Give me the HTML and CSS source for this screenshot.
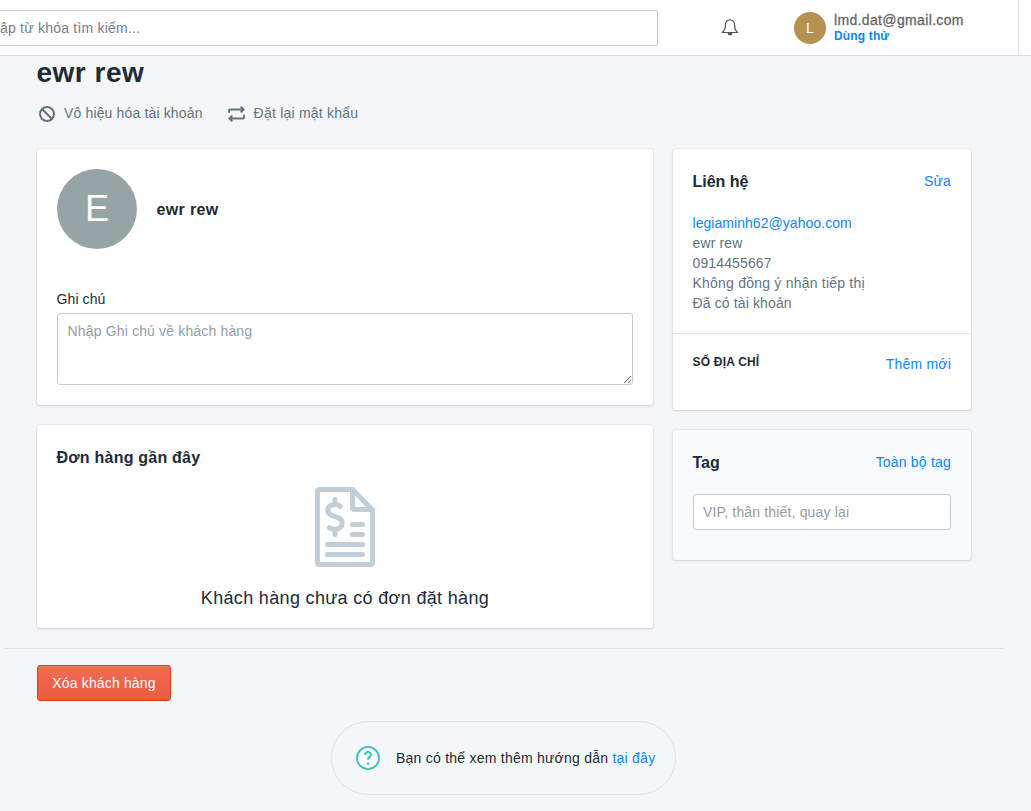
FILE: index.html
```html
<!DOCTYPE html>
<html lang="vi">
<head>
<meta charset="utf-8">
<title>ewr rew</title>
<link rel="stylesheet" href="styles.css">
</head>
<body>
<header class="topbar">
  <div class="search"><span class="search-text">ập từ khóa tìm kiếm...</span></div>
  <div class="bell">
    <svg width="18" height="18" viewBox="0 0 18 18" fill="none" stroke="#555" stroke-width="1.2" stroke-linejoin="round" stroke-linecap="round"><path d="M9 1v1M9 2C5.900 2 4.400 4.300 4.400 7.200c0 3.500-1 5.500-3.200 7.300h15.600c-2.200-1.800-3.200-3.800-3.200-7.300C13.600 4.300 12.100 2 9 2Z"/><path d="M7.200 15.600c.4 1.700 3.200 1.700 3.600 0Z" fill="#555"/></svg>
  </div>
  <div class="account">
    <div class="account-avatar">L</div>
    <div class="account-info">
      <div class="account-email">lmd.dat@gmail.com</div>
      <div class="account-plan">Dùng thử</div>
    </div>
  </div>
  <div class="topbar-end"></div>
</header>
<main class="page">
  <h1 class="title">ewr rew</h1>
  <div class="actions">
    <div class="action">
      <svg width="16" height="16" viewBox="0 0 16 16" fill="none" stroke="#637381" stroke-width="2"><circle cx="8" cy="8" r="7"/><path d="m3 3 10 10"/></svg>
      <span class="action-disable">Vô hiệu hóa tài khoản</span>
    </div>
    <div class="action">
      <svg width="17" height="16" viewBox="0 0 17 16" fill="none" stroke="#637381" stroke-width="2" stroke-linecap="round" stroke-linejoin="round"><path d="M1 6V4.500Q1 3.500 2 3.500H15.500M13.300 1.200 15.600 3.500l-2.300 2.300M16 9.500V11.500Q16 12.500 15 12.500H1.500M3.700 10.200 1.400 12.500l2.300 2.300"/></svg>
      <span class="action-reset">Đặt lại mật khẩu</span>
    </div>
  </div>
  <div class="columns">
    <div class="column">
      <section class="card profile">
        <div class="person">
          <div class="avatar">E</div>
          <h2 class="heading person-name">ewr rew</h2>
        </div>
        <label class="label" for="note">Ghi chú</label>
        <textarea class="note" id="note" placeholder="Nhập Ghi chú về khách hàng"></textarea>
      </section>
      <section class="card orders">
        <h2 class="heading orders-heading">Đơn hàng gần đây</h2>
        <svg class="orders-icon" width="60" height="80" viewBox="0 0 60 80" fill="none" stroke="#c1cdd7" stroke-width="5" stroke-linecap="round" stroke-linejoin="round"><path d="M4.500 2.500h33L57.500 23v52.500q0 2-2 2h-51q-2 0-2-2v-71q0-2 2-2Z"/><path d="M37.500 3v17.500q0 2 2 2H57M37.500 37.500h10M37.500 47.500h10M12.500 57.500h35M12.500 67.500h35"/><path d="M25.200 19.300C22 16 12.800 17 12.800 23.300c0 8 14.400 4.800 14.400 12.700 0 6.800-9 7.500-12.700 4.700M20 12.500v5M20 42.500v5"/></svg>
        <p class="orders-empty">Khách hàng chưa có đơn đặt hàng</p>
      </section>
    </div>
    <aside class="column">
      <section class="card">
        <div class="contact">
          <div class="row">
            <h2 class="heading">Liên hệ</h2>
            <a class="link">Sửa</a>
          </div>
          <div class="details">
            <a class="link email">legiaminh62@yahoo.com</a>
            <div>ewr rew</div>
            <div class="phone">0914455667</div>
            <div class="marketing">Không đồng ý nhận tiếp thị</div>
            <div>Đã có tài khoản</div>
          </div>
        </div>
        <div class="addresses row">
          <h3 class="subheading">SỔ ĐỊA CHỈ</h3>
          <a class="link add">Thêm mới</a>
        </div>
      </section>
      <section class="card tags">
        <div class="row">
          <h2 class="heading">Tag</h2>
          <a class="link">Toàn bộ tag</a>
        </div>
        <input class="tag-input" placeholder="VIP, thân thiết, quay lại">
      </section>
    </aside>
  </div>
  <footer class="footer">
    <button class="delete">Xóa khách hàng</button>
  </footer>
  <div class="help">
    <svg width="24" height="24" viewBox="0 0 24 24" fill="none"><circle cx="12" cy="12" r="11" fill="#fff" stroke="#47c1bf" stroke-width="2"/><path d="M9.200 8.900C9.200 5 14.900 5.200 14.900 8.600c0 2.300-2.900 2.300-2.900 5.200" stroke="#47c1bf" stroke-width="2.200"/><circle cx="12" cy="17.700" r="1.300" fill="#47c1bf"/></svg>
    <span class="help-text">Bạn có thể xem thêm hướng dẫn <a class="link">tại đây</a></span>
  </div>
</main>
</body>
</html>
```
FILE: styles.css
```css
* { box-sizing: border-box; }
body {
  margin: 0;
  height: 811px;
  overflow: hidden;
  background: #f4f6f8;
  color: #212b36;
  font: 14px/20px "Liberation Sans", Arial, sans-serif;
  white-space: nowrap;
}
h1, h2, h3, p { margin: 0; }
svg { display: block; flex: none; }
.topbar {
  display: flex;
  align-items: center;
  height: 56px;
  background: #fff;
  border-bottom: 1px solid #d9dce1;
}
.search {
  width: 658px;
  height: 36px;
  padding-top: 7px;
  border: 1px solid #c4cad6;
  border-left: 0;
  border-radius: 0 3px 3px 0;
  color: #74808c;
  letter-spacing: .22px;
}
.bell { margin-left: 63px; padding-bottom: 1px; }
.account { display: flex; gap: 8px; width: 224px; margin-left: 55px; }
.account-avatar {
  width: 32px;
  height: 32px;
  border-radius: 50%;
  background: #b49150;
  color: #fff;
  font-size: 14px;
  line-height: 32px;
  text-align: center;
}
.account-email { color: #666; font-size: 14px; line-height: 17px; letter-spacing: .35px; -webkit-text-stroke: .3px #666; }
.account-plan { color: #0c86fb; font-size: 12px; font-weight: bold; line-height: 14px; letter-spacing: .15px; }
.topbar-end { width: 13px; height: 55px; border-left: 1px solid #dfe3e8; }
.page { padding: 0 28px 0 5px; }
.title { padding: 0 32px; font-size: 28px; line-height: 34px; letter-spacing: .5px; text-indent: -.5px; }
.actions { display: flex; gap: 25px; padding: 13px 0 0 34px; color: #637381; }
.action { display: flex; gap: 9px; height: 20px; }
.action svg { margin-top: 3px; }
.action-disable { letter-spacing: .15px; }
.action-reset { letter-spacing: .22px; }
.columns {
  display: grid;
  grid-template-columns: 616px 298px;
  gap: 20px;
  padding: 26px 0 0 32px;
}
.column { display: flex; flex-direction: column; gap: 20px; }
.card {
  border-radius: 3px;
  background: #fff;
  box-shadow: 0 0 0 1px rgba(63, 63, 68, .05), 0 1px 3px rgba(63, 63, 68, .15);
}
.heading { height: 24px; font-size: 16px; line-height: 26px; text-indent: -.5px; }
.person-name { letter-spacing: .35px; }
.profile { height: 256px; padding: 20px; }
.person { display: flex; align-items: center; gap: 20px; }
.avatar {
  width: 80px;
  height: 80px;
  border-radius: 50%;
  background: #95a5a5;
  color: #fff;
  font-size: 36px;
  line-height: 80px;
  text-align: center;
}
.label { display: block; margin-top: 40px; letter-spacing: .1px; text-indent: -.5px; }
.note, .tag-input {
  display: block;
  width: 100%;
  border: 1px solid #c4cdd5;
  border-radius: 3px;
  background: #fff;
  outline: 0;
  font: inherit;
  letter-spacing: .16px;
}
.note { height: 72px; margin-top: 4px; padding: 7px 9.5px; resize: vertical; }
.note::placeholder, .tag-input::placeholder { color: #919eab; opacity: 1; }
.orders { height: 203px; padding: 20px; }
.orders-heading { letter-spacing: .22px; }
.orders-icon { margin: 18px auto 0; }
.orders-empty { margin-top: 19px; font-size: 18px; line-height: 24px; letter-spacing: .33px; text-align: center; }
.row { display: flex; justify-content: space-between; }
.link { color: #0c86fb; }
.row .link { line-height: 24px; letter-spacing: .2px; }
.contact { height: 184px; padding: 20px; }
.details { margin-top: 20px; color: #637381; letter-spacing: .13px; text-indent: -.5px; }
.details .link { display: block; letter-spacing: .05px; }
.details .marketing { letter-spacing: .22px; }
.addresses { height: 77px; padding: 18px 20px; border-top: 1px solid #e3e7eb; }
.subheading { font-size: 12px; line-height: 20px; letter-spacing: .2px; text-indent: -.5px; }
.tags { height: 130px; padding: 20px; background: #f9fafc; }
.tag-input { height: 36px; margin-top: 20px; padding: 0 9px; }
.footer { margin-top: 20px; padding: 16px 32px 20px; border-top: 1px solid #dfe3e8; }
.delete {
  display: block;
  width: 134px;
  height: 36px;
  padding: 0;
  border: 1px solid #e6391a;
  border-radius: 3px;
  background: linear-gradient(#f16d54, #ea5a3e);
  box-shadow: inset 0 1px 0 #ee7864;
  color: #fff;
  font: inherit;
  letter-spacing: .15px;
}
.help {
  display: flex;
  align-items: center;
  gap: 16px;
  width: 345px;
  height: 74px;
  margin: 0 0 0 326px;
  padding-left: 24px;
  border: 1px solid #dfe3e8;
  border-radius: 37px;
}
.help-text { letter-spacing: .24px; }
```
